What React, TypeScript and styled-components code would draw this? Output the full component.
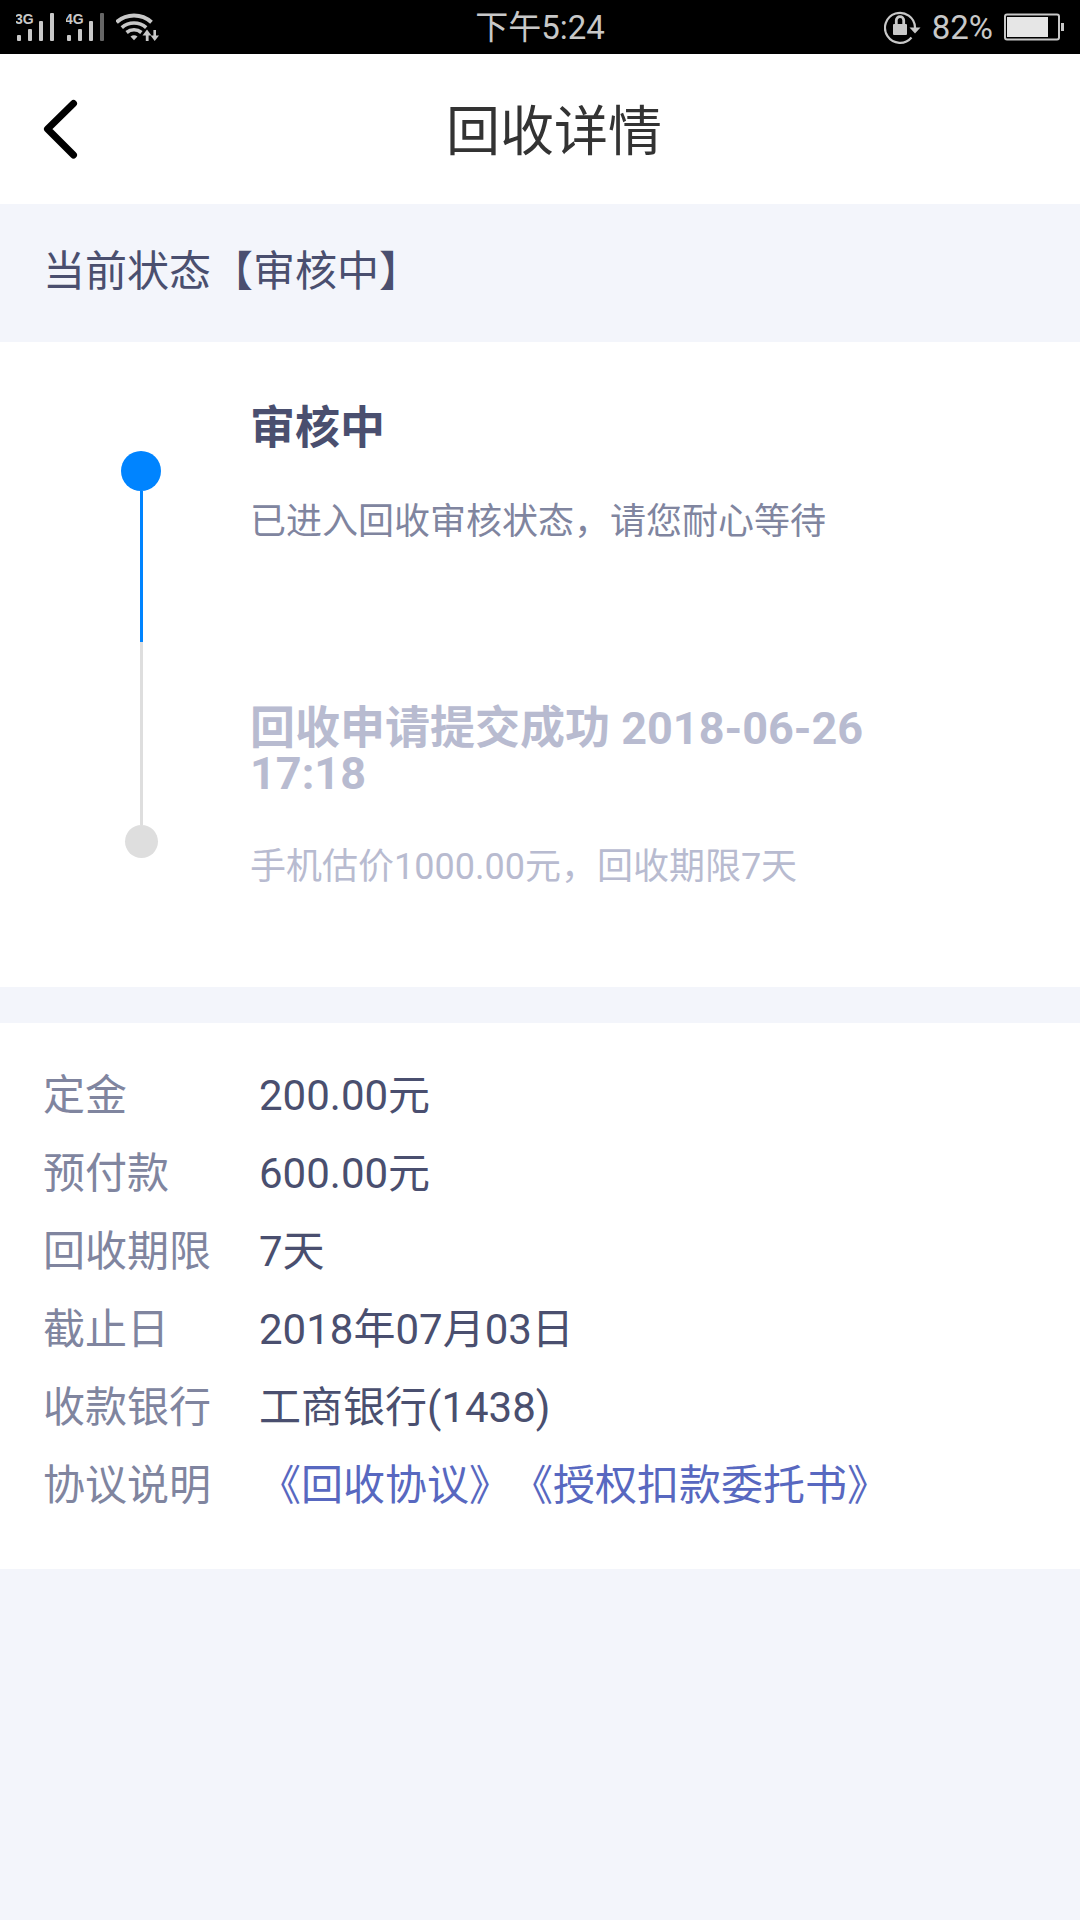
import React from "react";
import styled, { createGlobalStyle } from "styled-components";

const GlobalStyle = createGlobalStyle`
  * {
    box-sizing: border-box;
  }
  body {
    margin: 0;
    background: #f3f5fb;
    color: #4a4f6f;
    font-family: Roboto, "Noto Sans CJK SC", sans-serif;
    text-spacing-trim: space-all;
  }
`;

const StatusBar = styled.div`
  display: grid;
  grid-template-columns: 1fr auto 1fr;
  align-items: center;
  height: 54px;
  padding: 0 16px;
  background: #000;
  color: #c8c8c8;
  font-size: 33px;
  line-height: 40px;
`;

const StatusGroup = styled.div<{ $end?: boolean }>`
  display: flex;
  align-items: center;
  gap: ${(p) => (p.$end ? 11 : 12)}px;
  justify-content: ${(p) => (p.$end ? "flex-end" : "flex-start")};
`;

const Readout = styled.span`
  padding-top: 2px;
`;

const Glyph = styled.svg`
  display: block;
  flex: none;
`;

const GlyphText = styled.text`
  font: 700 14px "Liberation Sans", Arial, sans-serif;
`;

const Header = styled.header`
  display: grid;
  grid-template-columns: 100px 1fr 72px;
  align-items: center;
  height: 150px;
  background: #fff;
`;

const BackButton = styled.button`
  display: flex;
  align-items: center;
  height: 100%;
  padding: 0 0 0 42px;
  border: 0;
  background: none;
  cursor: pointer;
`;

const PageTitle = styled.h1`
  margin: 0;
  padding-top: 8px;
  color: #333;
  font-size: 54px;
  font-weight: 400;
  line-height: 72px;
  text-align: center;
`;

const CurrentState = styled.p`
  margin: 0;
  padding: 38px 43px 40px;
  font-size: 42px;
  line-height: 60px;
`;

const Card = styled.section`
  background: #fff;
`;

const Timeline = styled.ol`
  margin: 0;
  padding: 0;
  list-style: none;
`;

const TimelineItem = styled.li`
  display: grid;
  grid-template-columns: 64px 1fr;
  column-gap: 77px;
  padding: 0 180px 0 109px;
`;

const Rail = styled.div<{ $color: string; $last?: boolean }>`
  display: flex;
  flex-direction: ${(p) => (p.$last ? "column-reverse" : "column")};
  align-items: center;
  padding: ${(p) => (p.$last ? "0 0 129px" : "109px 0 0")};
  color: ${(p) => p.$color};
`;

const Dot = styled.span<{ $size: number }>`
  flex: none;
  width: ${(p) => p.$size}px;
  height: ${(p) => p.$size}px;
  border-radius: 50%;
  background: currentColor;
`;

const Line = styled.span`
  flex: 1;
  width: 3px;
  background: currentColor;
`;

const Step = styled.div<{ $past?: boolean }>`
  padding: 64px 0 99px;
  color: ${(p) => (p.$past ? "#b8bbd0" : "#4a4f6f")};
`;

const StepTitle = styled.h2`
  margin: 0 0 50px;
  font-size: 45px;
  font-weight: 700;
  line-height: 45px;
`;

const StepText = styled.p<{ $past?: boolean }>`
  margin: 0;
  color: ${(p) => (p.$past ? "#b8bbd0" : "#80859f")};
  font-size: 36px;
  line-height: 42px;
`;

const Details = styled.dl`
  margin: 36px 0 0;
  padding: 34px 43px 44px;
  background: #fff;
  font-size: 42px;
  line-height: 78px;
`;

const DetailRow = styled.div`
  display: grid;
  grid-template-columns: 216px 1fr;
`;

const DetailLabel = styled.dt`
  color: #80859f;
`;

const DetailValue = styled.dd`
  margin: 0;
`;

const AgreementLink = styled.a`
  color: #5868c0;
  text-decoration: none;
`;

function Signal({ label, dim }: { label: string; dim?: boolean }) {
  return (
    <Glyph width="38" height="30" viewBox="0 0 38 30" fill="#c8c8c8">
      <GlyphText x="-1" y="12">{label}</GlyphText>
      <rect x="1" y="23" width="4" height="6" rx="1" />
      <rect x="12" y="17" width="4" height="12" rx="1" />
      <rect x="23" y="9" width="4" height="20" rx="1" />
      <rect x="34" y="1" width="4" height="28" rx="1" fill={dim ? "#666" : "#c8c8c8"} />
    </Glyph>
  );
}

function Wifi() {
  return (
    <Glyph width="46" height="30" viewBox="1 0 46 30" fill="none" stroke="#c8c8c8">
      <path d="M1.5 10.2A26 26 0 0 1 36.5 10.2" strokeWidth="4" />
      <path d="M6.8 15.6A18.5 18.5 0 0 1 31.2 15.6" strokeWidth="3.6" />
      <path d="M11.6 20.5A11.5 11.5 0 0 1 26.4 20.5" strokeWidth="3.6" />
      <path d="M15.5 24.5Q19 21.8 22.5 24.5L19 28.3Z" fill="#c8c8c8" stroke="none" />
      <path d="M32 17.5L27.5 23.5H30.8V29H33.6V23.5H36.5Z" fill="#c8c8c8" stroke="#000" strokeWidth="1" paintOrder="stroke" />
      <path d="M39.7 29L44 23.5H41V18H38.4V23.5H35.6Z" fill="#c8c8c8" stroke="none" />
    </Glyph>
  );
}

function RotationLock() {
  return (
    <Glyph width="37" height="34" viewBox="0 0 37 34" fill="none" stroke="#c8c8c8">
      <path d="M27.5 27.5A15 15 0 1 1 31 17.5V20" strokeWidth="2.2" />
      <path d="M25.5 17.5H36.5L31 23.5Z" fill="#c8c8c8" stroke="none" />
      <rect x="9" y="14" width="14" height="11" rx="1" fill="#c8c8c8" stroke="none" />
      <path d="M12.3 15V10.3A3.7 3.7 0 0 1 19.7 10.3V15" strokeWidth="2.8" />
    </Glyph>
  );
}

function Battery() {
  return (
    <Glyph width="60" height="28" viewBox="0 0 60 28">
      <rect x="1" y="1.5" width="54" height="25" rx="2" fill="none" stroke="#c8c8c8" strokeWidth="2" />
      <rect x="3" y="4" width="41" height="20" fill="#e6e6e6" />
      <rect x="57" y="10" width="3" height="8" fill="#c8c8c8" />
    </Glyph>
  );
}

const details = [
  ["定金", "200.00元"],
  ["预付款", "600.00元"],
  ["回收期限", "7天"],
  ["截止日", "2018年07月03日"],
  ["收款银行", "工商银行(1438)"],
];

export default function App() {
  return (
    <>
      <GlobalStyle />
      <StatusBar>
        <StatusGroup>
          <Signal label="3G" />
          <Signal label="4G" dim />
          <Wifi />
        </StatusGroup>
        <Readout>下午5:24</Readout>
        <StatusGroup $end>
          <RotationLock />
          <Readout>82%</Readout>
          <Battery />
        </StatusGroup>
      </StatusBar>
      <Header>
        <BackButton aria-label="返回" type="button">
          <Glyph width="36" height="60" viewBox="0 0 36 60" fill="none" stroke="#000" strokeWidth="7" strokeLinecap="round" strokeLinejoin="round">
            <path d="M31.5 4.5L5.5 30L31.5 56" />
          </Glyph>
        </BackButton>
        <PageTitle>回收详情</PageTitle>
      </Header>
      <main>
        <CurrentState>当前状态【审核中】</CurrentState>
        <Card>
          <Timeline>
            <TimelineItem>
              <Rail $color="#0084ff">
                <Dot $size={40} />
                <Line />
              </Rail>
              <Step>
                <StepTitle>审核中</StepTitle>
                <StepText>已进入回收审核状态，请您耐心等待</StepText>
              </Step>
            </TimelineItem>
            <TimelineItem>
              <Rail $color="#dedede" $last>
                <Dot $size={33} />
                <Line />
              </Rail>
              <Step $past>
                <StepTitle>回收申请提交成功 2018-06-26 17:18</StepTitle>
                <StepText $past>手机估价1000.00元，回收期限7天</StepText>
              </Step>
            </TimelineItem>
          </Timeline>
        </Card>
        <Details>
          {details.map(([label, value]) => (
            <DetailRow key={label}>
              <DetailLabel>{label}</DetailLabel>
              <DetailValue>{value}</DetailValue>
            </DetailRow>
          ))}
          <DetailRow>
            <DetailLabel>协议说明</DetailLabel>
            <DetailValue>
              <AgreementLink href="#recycle">《回收协议》</AgreementLink>
              <AgreementLink href="#authorization">《授权扣款委托书》</AgreementLink>
            </DetailValue>
          </DetailRow>
        </Details>
      </main>
    </>
  );
}
